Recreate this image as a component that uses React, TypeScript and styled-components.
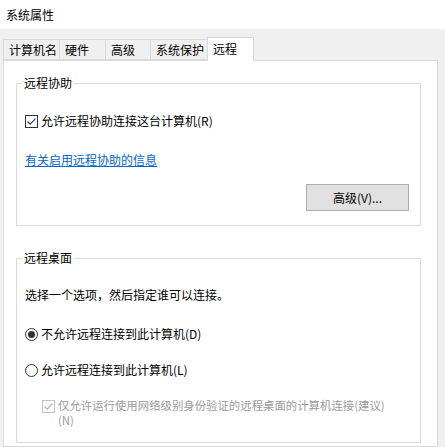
import styled, { createGlobalStyle } from 'styled-components';

const GlobalStyle = createGlobalStyle`
    html, body {
        margin: 0;
        padding: 0;
        background: #f0f0f0;
    }
    * {
        box-sizing: border-box;
    }
`

const tabs = [
    { label: '计算机名', width: 57 },
    { label: '硬件', width: 47 },
    { label: '高级', width: 46 },
    { label: '系统保护', width: 58 },
    { label: '远程', width: 47 },
];

const CheckIcon = ({ disabled }: { disabled?: boolean }) => {
    const c = disabled ? '#c4c4c4' : '#333333';
    return (
        <svg width="13" height="13" viewBox="0 0 13 13">
            <rect x="0.5" y="0.5" width="12" height="12" fill="#fff" stroke={c} />
            <path d="M2.5 6.5 L5.2 9.2 L10.5 3.6" fill="none" stroke={disabled ? '#b0b0b0' : '#2a4c6e'} strokeWidth="1.2" />
        </svg>
    )
}

const App = () => {
    return (
        <Window>
            <GlobalStyle />
            <TitleBar>系统属性</TitleBar>
            <Body>
                <TabStrip>
                    {tabs.map((t, i) => (
                        <Tab key={t.label} $w={t.width} $active={i === tabs.length - 1}>
                            {t.label}
                        </Tab>
                    ))}
                </TabStrip>
                <Panel>
                    <GroupBox>
                        <Legend>远程协助</Legend>
                        <CheckRow $top={22}>
                            <CheckIcon />
                            <span>允许远程协助连接这台计算机(R)</span>
                        </CheckRow>
                        <Link $top={23}>有关启用远程协助的信息</Link>
                        <Button>高级(V)...</Button>
                    </GroupBox>
                    <GroupBox $top={24}>
                        <Legend>远程桌面</Legend>
                        <Text $top={21}>选择一个选项，然后指定谁可以连接。</Text>
                        <CheckRow $top={23}>
                            <Radio $checked />
                            <span>不允许远程连接到此计算机(D)</span>
                        </CheckRow>
                        <CheckRow $top={20}>
                            <Radio />
                            <span>允许远程连接到此计算机(L)</span>
                        </CheckRow>
                        <SubRow>
                            <CheckIcon disabled />
                            <SubText>
                                <div>仅允许运行使用网络级别身份验证的远程桌面的计算机连接(建议)</div>
                                <div>(N)</div>
                            </SubText>
                        </SubRow>
                    </GroupBox>
                </Panel>
            </Body>
        </Window>
    )
}

export default App

const Window = styled.div`
    width: 445px;
    height: 447px;
    display: flex;
    flex-direction: column;
    background: #f0f0f0;
    overflow: hidden;
    font-family: "Noto Sans CJK SC", "Noto Sans", sans-serif;
    font-size: 12px;
    color: #000;
`

const TitleBar = styled.div`
    height: 29px;
    flex-shrink: 0;
    display: flex;
    align-items: center;
    padding-left: 6px;
    background: #fff;
`

const Body = styled.div`
    flex: 1;
    display: flex;
    flex-direction: column;
    padding: 8px 7px 0 3px;
    min-height: 0;
`

const TabStrip = styled.div`
    display: flex;
    align-items: flex-end;
    height: 24px;
    margin-bottom: -1px;
    position: relative;
    z-index: 1;
`

const Tab = styled.div<{ $w: number; $active?: boolean }>`
    width: ${p => p.$w}px;
    height: ${p => (p.$active ? 24 : 21)}px;
    margin-bottom: ${p => (p.$active ? 0 : 1)}px;
    margin-left: -1px;
    &:first-child {
        margin-left: 0;
    }
    display: flex;
    align-items: center;
    padding: 0 0 ${p => (p.$active ? 2 : 0)}px 5px;
    background: ${p => (p.$active ? '#fff' : '#f0f0f0')};
    border: 1px solid #d9d9d9;
    border-bottom: ${p => (p.$active ? 'none' : '1px solid #d9d9d9')};
    line-height: 16px;
    white-space: nowrap;
`

const Panel = styled.div`
    flex: 1;
    background: #fff;
    border: 1px solid #d9d9d9;
    padding: 14px 16px 0 12px;
    display: flex;
    flex-direction: column;
`

const GroupBox = styled.fieldset<{ $top?: number }>`
    margin: ${p => p.$top ?? 0}px 0 0 0;
    padding: 0 11px 14px 8px;
    border: 1px solid #dcdcdc;
    display: flex;
    flex-direction: column;
    min-width: 0;
`

const Legend = styled.legend`
    padding: 0 2px;
    margin-left: -3px;
    line-height: 16px;
`

const CheckRow = styled.div<{ $top: number }>`
    margin-top: ${p => p.$top}px;
    display: flex;
    align-items: center;
    gap: 3px;
    line-height: 16px;
    white-space: nowrap;
`

const SubRow = styled.div`
    margin-top: 20px;
    display: flex;
    align-items: flex-start;
    gap: 3px;
    padding-left: 17px;
    color: #9a9a9a;
    svg {
        margin-top: 2px;
        flex-shrink: 0;
    }
`

const SubText = styled.div`
    font-size: 11.4px;
    line-height: 15px;
    white-space: nowrap;
`

const Radio = styled.span<{ $checked?: boolean }>`
    width: 13px;
    height: 13px;
    border-radius: 50%;
    border: 1px solid #333;
    background: #fff;
    display: inline-flex;
    align-items: center;
    justify-content: center;
    flex-shrink: 0;
    &::after {
        content: '';
        width: 7px;
        height: 7px;
        border-radius: 50%;
        background: ${p => (p.$checked ? '#333' : 'transparent')};
    }
`

const Link = styled.a<{ $top: number }>`
    margin-top: ${p => p.$top}px;
    color: #0066cc;
    text-decoration: underline;
    line-height: 16px;
    align-self: flex-start;
    cursor: pointer;
`

const Text = styled.div<{ $top: number }>`
    margin-top: ${p => p.$top}px;
    line-height: 16px;
`

const Button = styled.button`
    margin-top: 16px;
    align-self: flex-end;
    width: 103px;
    height: 27px;
    background: #e1e1e1;
    border: 1px solid #adadad;
    font-family: inherit;
    font-size: 12px;
    color: #000;
    padding: 0;
`
